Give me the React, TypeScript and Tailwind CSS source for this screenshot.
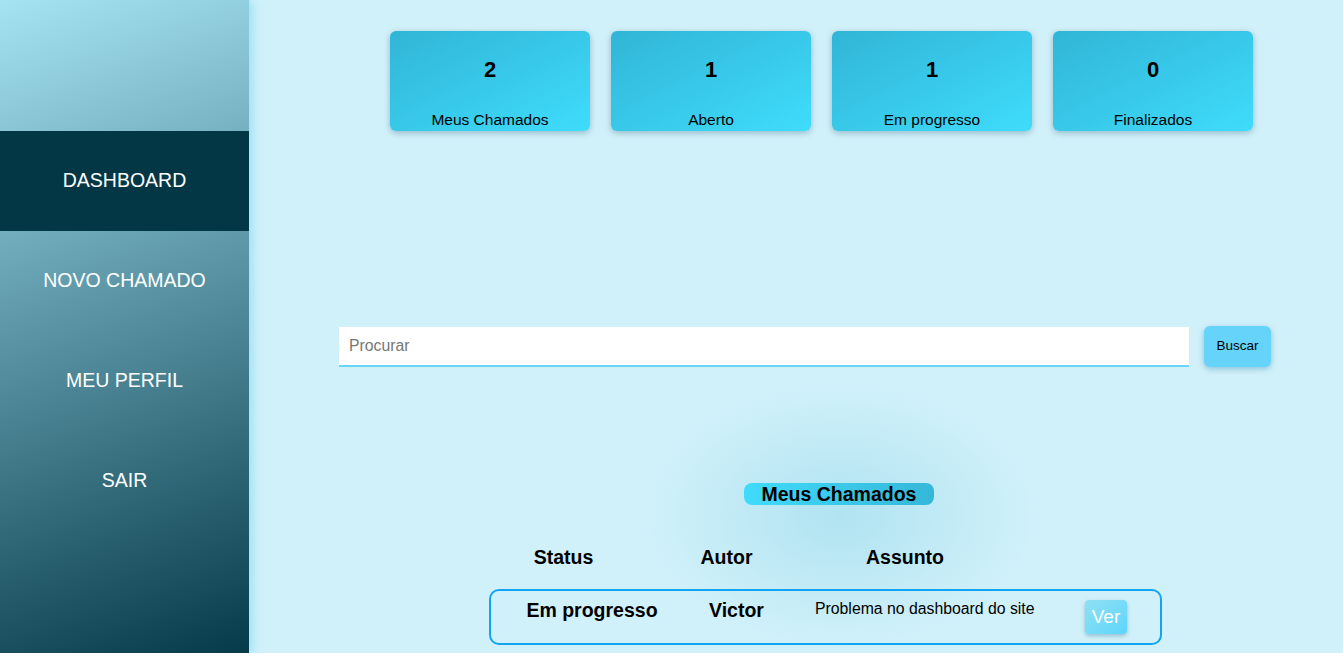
import React from 'react';

const stats = [
  { value: 2, label: 'Meus Chamados' },
  { value: 1, label: 'Aberto' },
  { value: 1, label: 'Em progresso' },
  { value: 0, label: 'Finalizados' },
];

const menu = ['DASHBOARD', 'NOVO CHAMADO', 'MEU PERFIL', 'SAIR'];

export default function App() {
  return (
    <div className="flex h-[653px] w-full overflow-hidden bg-[#d1f1fa] font-['Liberation_Sans',Arial,sans-serif] text-black">
      {/* Sidebar */}
      <aside className="relative z-10 flex w-[249px] shrink-0 flex-col bg-[linear-gradient(160deg,#a5e3f3,#053a4a)] shadow-[3px_0_10px_#95dff6]">
        <div className="h-[131px]" />
        {menu.map((item, i) => (
          <div
            key={item}
            className={`flex h-[100px] items-center justify-center text-[19.5px] text-white ${
              i === 0 ? 'bg-[#043746]' : ''
            }`}
          >
            {item}
          </div>
        ))}
      </aside>

      {/* Main */}
      <main className="flex flex-1 flex-col bg-[radial-gradient(ellipse_200px_135px_at_591px_515px,#b0e3f1_0%,#d1f1fa_100%)]">
        {/* Stat cards */}
        <div className="ml-[141px] mt-[31px] flex gap-[21px]">
          {stats.map((s) => (
            <div
              key={s.label}
              className="flex h-[100px] w-[200px] flex-col items-center rounded-md bg-gradient-to-br from-[#31b5d6] to-[#3fdcfc] shadow-[0_2px_6px_rgba(0,60,90,0.3)]"
            >
              <span className="mt-[26px] text-[22px] font-bold leading-[26px]">{s.value}</span>
              <span className="mt-[28px] text-[15.5px] leading-[18px]">{s.label}</span>
            </div>
          ))}
        </div>

        {/* Search */}
        <div className="ml-[90px] mt-[195px] flex items-center gap-[15px]">
          <input
            type="text"
            placeholder="Procurar"
            className="h-[40px] w-[850px] border-b-2 border-[#66d4fb] bg-white pl-[10px] text-[15.8px] outline-none placeholder:text-[#777]"
          />
          <button className="h-[41px] w-[67px] rounded-md bg-[#66d4fa] text-[13.5px] shadow-[0_2px_6px_rgba(0,110,150,0.35)]">
            Buscar
          </button>
        </div>

        {/* Meus chamados */}
        <div className="ml-[495px] mt-[116px] flex h-[22px] w-[190px] items-center justify-center rounded-[8px] bg-gradient-to-r from-[#40dbfc] to-[#35b7d8]">
          <span className="text-[19.5px] font-bold leading-[22px]">Meus Chamados</span>
        </div>

        <div className="ml-[240px] mt-[41px] flex text-[19.5px] font-bold leading-[22px]">
          <div className="w-[149px] text-center">Status</div>
          <div className="w-[177px] text-center">Autor</div>
          <div className="w-[180px] text-center">Assunto</div>
        </div>

        <div className="ml-[240px] mt-[21px] flex h-[56px] w-[673px] shrink-0 items-start rounded-[10px] border-2 border-[#12a4f4] pt-[8px]">
          <div className="w-[202px] text-center text-[19.5px] font-bold leading-[22px]">Em progresso</div>
          <div className="w-[87px] text-center text-[19.5px] font-bold leading-[22px]">Victor</div>
          <div className="w-[305px] pl-[35px] text-[15.8px] leading-[20px]">Problema no dashboard do site</div>
          <button className="mt-[1px] flex h-[34px] w-[42px] items-center justify-center rounded-[4px] bg-gradient-to-br from-[#8fe0f3] to-[#5cd5fb] text-[19px] text-white shadow-[0_2px_4px_rgba(0,80,120,0.3)]">
            Ver
          </button>
        </div>
      </main>
    </div>
  );
}
